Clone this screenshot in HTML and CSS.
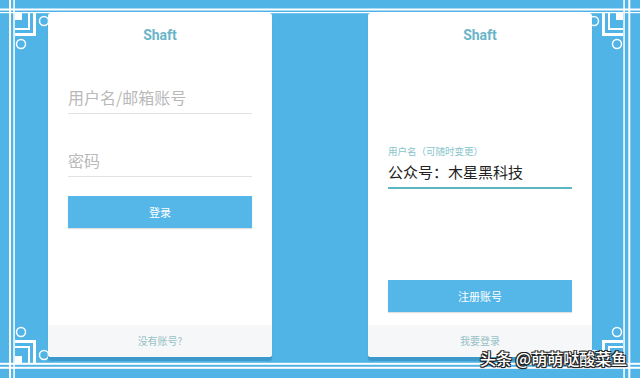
FILE: index.html
```html
<!DOCTYPE html>
<html>
<head>
<meta charset="utf-8">
<link rel="stylesheet" href="styles.css">
</head>
<body>
<div class="stage">
  <svg class="frame" width="640" height="378" viewBox="0 0 640 378" aria-hidden="true">
    <defs>
      <g id="orn">
        <rect x="15" y="13" width="7" height="7" fill="#fff"/>
        <path d="M15 29 H29 V13" fill="none" stroke="#fff" stroke-width="2"/>
        <path d="M15 34.5 H34.5 V13" fill="none" stroke="#fff" stroke-width="3"/>
        <circle cx="44" cy="21" r="4.5" fill="none" stroke="#fff" stroke-width="1.5"/>
        <circle cx="21" cy="44" r="4.5" fill="none" stroke="#fff" stroke-width="1.5"/>
      </g>
    </defs>
    <rect x="0" y="8.5" width="640" height="2" fill="#fff"/>
    <rect x="0" y="12" width="640" height="1.2" fill="#fff"/>
    <rect x="0" y="362.8" width="640" height="2" fill="#fff"/>
    <rect x="0" y="366.8" width="640" height="2" fill="#fff"/>
    <rect x="9" y="0" width="2" height="378" fill="#fff"/>
    <rect x="13.3" y="0" width="1.5" height="378" fill="#fff"/>
    <rect x="623.3" y="0" width="1.5" height="378" fill="#fff"/>
    <rect x="628.3" y="0" width="2" height="378" fill="#fff"/>
    <use href="#orn"/>
    <use href="#orn" transform="translate(638 0) scale(-1 1)"/>
    <use href="#orn" transform="translate(0 376) scale(1 -1)"/>
    <use href="#orn" transform="translate(638 376) scale(-1 -1)"/>
  </svg>

  <div class="cards">
    <section class="card">
      <div class="title">Shaft</div>
      <div class="body">
        <div class="field field-user">用户名/邮箱账号</div>
        <div class="field field-pass">密码</div>
        <div class="btn btn-login">登录</div>
      </div>
      <div class="footer">没有账号?</div>
    </section>

    <section class="card">
      <div class="title">Shaft</div>
      <div class="body">
        <div class="label">用户名（可随时变更）</div>
        <div class="value">公众号：木星黑科技</div>
        <div class="btn btn-reg">注册账号</div>
      </div>
      <div class="footer">我要登录</div>
    </section>
  </div>

  <div class="watermark">头条 @萌萌哒酸菜鱼</div>
</div>
</body>
</html>
```

FILE: styles.css
```css
* { box-sizing: border-box; }
html, body { margin: 0; padding: 0; }
body {
  width: 640px;
  height: 378px;
  overflow: hidden;
  font-family: "Noto Sans CJK SC", "Noto Sans", sans-serif;
}
.stage {
  position: relative;
  width: 640px;
  height: 378px;
  background: #51b4e7;
  overflow: hidden;
}
.frame {
  position: absolute;
  left: 0;
  top: 0;
  z-index: 0;
}
.cards {
  position: relative;
  z-index: 1;
  display: flex;
  justify-content: center;
  gap: 96px;
  padding-top: 13px;
}
.card {
  width: 224px;
  height: 344px;
  background: #fff;
  border-radius: 3px;
  display: flex;
  flex-direction: column;
  overflow: hidden;
  box-shadow: 0 4px 1px #3d98cc;
}
.title {
  margin-top: 14px;
  height: 17px;
  line-height: 17px;
  text-align: center;
  font-family: Roboto, "Noto Sans", sans-serif;
  font-weight: 700;
  font-size: 14px;
  color: #6ab5c9;
}
.body {
  padding: 0 20px;
  display: flex;
  flex-direction: column;
}
.field {
  font-size: 16px;
  line-height: 20px;
  color: #b9b9b9;
  padding-bottom: 6px;
  border-bottom: 1px solid #e2e2e2;
}
.field-user { margin-top: 43px; }
.field-pass { margin-top: 36px; }
.btn {
  height: 32px;
  background: #55b7e8;
  color: #fff;
  font-size: 11px;
  line-height: 32px;
  text-align: center;
  box-shadow: 0 1px 1px rgba(0, 0, 0, 0.12);
}
.btn-login { margin-top: 19px; }
.label {
  margin-top: 101px;
  font-size: 9.5px;
  line-height: 12px;
  color: #86c3cc;
}
.value {
  margin-top: 5px;
  font-size: 15px;
  line-height: 20px;
  color: #222;
  padding-bottom: 5px;
  border-bottom: 2px solid #5db7c2;
}
.btn-reg { margin-top: 91px; }
.footer {
  margin-top: auto;
  height: 32px;
  line-height: 32px;
  background: #f6f7f8;
  text-align: center;
  font-size: 10px;
  color: #97c1c7;
}
.watermark {
  position: absolute;
  left: 480px;
  top: 349px;
  z-index: 2;
  font-size: 16px;
  line-height: 18px;
  font-weight: 500;
  color: #fff;
  white-space: nowrap;
  text-shadow: -1px -1px 0 #222, 1px -1px 0 #222, -1px 1px 0 #222, 1px 1px 0 #222, 0 1px 1px #000;
}
```
